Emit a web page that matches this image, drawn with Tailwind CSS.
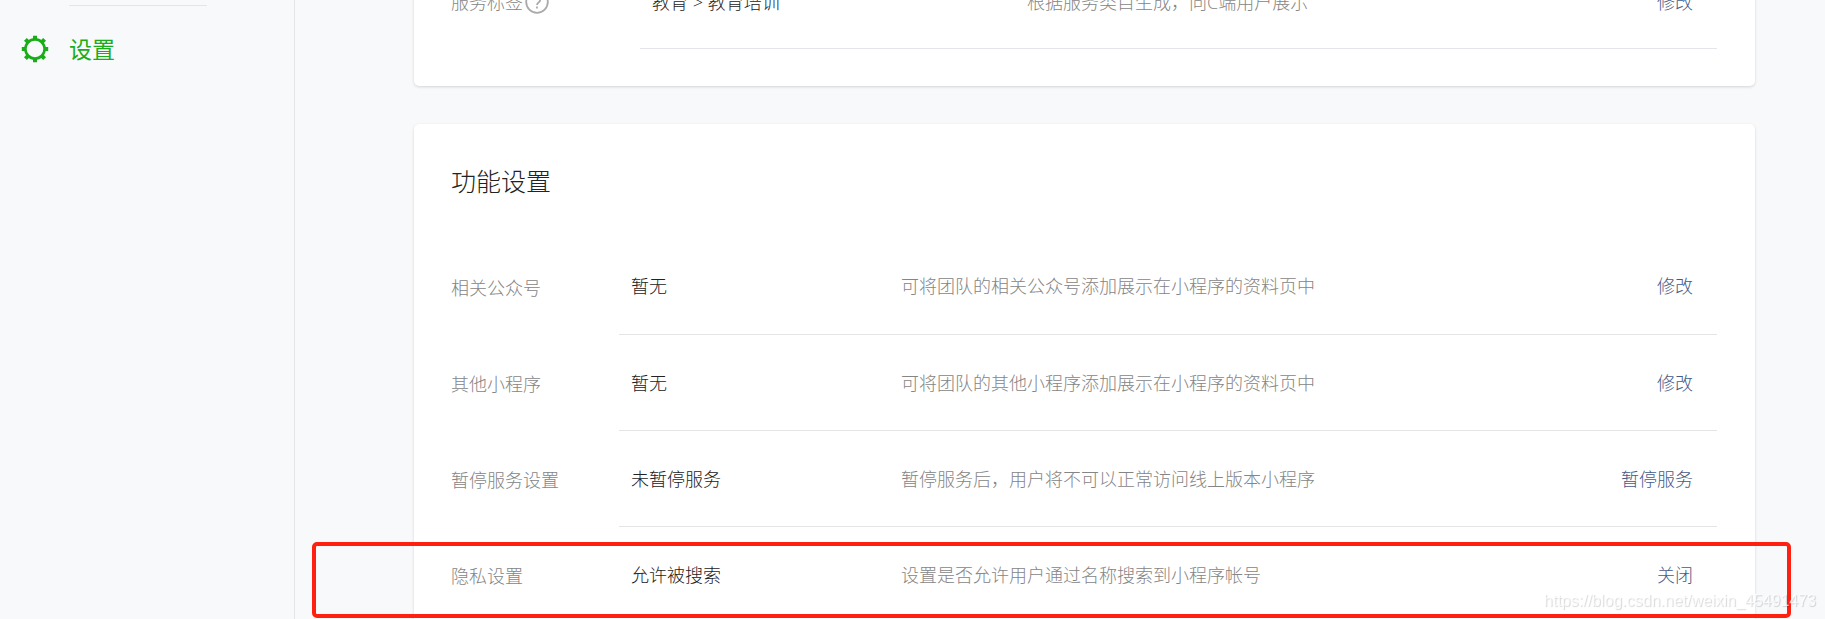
<!DOCTYPE html>
<html lang="zh-CN">
  <head>
    <meta charset="UTF-8" />
    <meta name="viewport" content="width=device-width, initial-scale=1.0" />
    <script src="https://cdn.jsdelivr.net/npm/@tailwindcss/browser@4"></script>
    <title>设置</title>
  </head>

  <body
    class="flex h-screen overflow-hidden bg-[#f8f9fb] font-['Open_Sans','Noto_Sans_CJK_SC',sans-serif] font-light text-lg"
  >
    <!-- sidebar -->
    <aside class="w-[295px] shrink-0 border-r border-[#e4e5e7]">
      <hr class="mt-[5px] ml-[69px] w-[138px] border-[#e4e5e7]" />
      <nav class="mt-6 pl-[21px]">
        <a href="#" class="flex items-start gap-5 text-[#1aad19]">
          <svg class="mt-[5px] size-7" viewBox="-14 -14 28 28" aria-hidden="true">
            <circle r="9.6" fill="none" stroke="currentColor" stroke-width="2.6" />
            <g fill="none" stroke="currentColor" stroke-width="4">
              <path d="M0-13.2V-10M0 13.2V10M-13.2 0H-10M13.2 0H10" />
              <path d="M-9.6-9.6L-7-7M9.6 9.6L7 7M-9.6 9.6L-7 7M9.6-9.6L7-7" />
            </g>
          </svg>
          <span class="text-[23px] leading-[38px] font-normal">设置</span>
        </a>
      </nav>
    </aside>

    <main class="ml-[119px] mr-[70px] flex-1">
      <!-- basic info, scrolled almost out of view -->
      <section
        class="-mt-12 rounded-[5px] bg-white pl-[37px] pr-[38px] pb-[37px] shadow-[0_1px_3px_rgba(0,0,0,0.15)]"
      >
        <table class="w-full table-fixed">
          <tbody>
            <tr class="h-24">
              <th scope="row" class="w-[189px] pt-1 text-left font-light text-[#858585]">
                <span class="flex items-center gap-0.5">
                  服务标签
                  <button type="button" aria-label="帮助" class="text-[#aaaaaa]">
                    <svg class="size-6" viewBox="0 0 24 24" fill="none" stroke="currentColor" stroke-width="1.8">
                      <circle cx="12" cy="12" r="10.8" />
                      <path d="M8.8 9.6a3.2 3.2 0 1 1 5 2.6c-1.2.9-1.8 1.4-1.8 2.8M12 16.4v2" />
                    </svg>
                  </button>
                </span>
              </th>
              <td class="w-[375px] border-b border-[#e4e4ea] pt-1 pl-3 text-[#222222]">教育 &gt; 教育培训</td>
              <td class="border-b border-[#e4e4ea] pt-1 pl-3 text-[#858585]">根据服务类目生成，向C端用户展示</td>
              <td class="w-32 border-b border-[#e4e4ea] pt-1 pr-6 text-right">
                <a href="#" class="text-[#455a88]">修改</a>
              </td>
            </tr>
          </tbody>
        </table>
      </section>

      <!-- feature settings -->
      <section
        class="mt-[38px] rounded-[5px] bg-white pt-10 pl-[37px] pr-[38px] pb-10 shadow-[0_1px_3px_rgba(0,0,0,0.15)]"
      >
        <h2 class="mb-[41px] text-[25px] leading-[34px] text-[#222222]">功能设置</h2>
        <div class="relative">
          <table class="w-full table-fixed">
            <tbody>
              <tr class="h-24">
                <th scope="row" class="w-[168px] pt-0.5 text-left font-light text-[#858585]">相关公众号</th>
                <td class="w-[270px] border-b border-[#e4e5e7] pl-3 text-[#222222]">暂无</td>
                <td class="border-b border-[#e4e5e7] pl-3 text-[#858585]">可将团队的相关公众号添加展示在小程序的资料页中</td>
                <td class="w-32 border-b border-[#e4e5e7] pr-6 text-right">
                  <a href="#" class="text-[#455a88]">修改</a>
                </td>
              </tr>
              <tr class="h-24">
                <th scope="row" class="pt-0.5 text-left font-light text-[#858585]">其他小程序</th>
                <td class="border-b border-[#e4e5e7] pl-3 text-[#222222]">暂无</td>
                <td class="border-b border-[#e4e5e7] pl-3 text-[#858585]">可将团队的其他小程序添加展示在小程序的资料页中</td>
                <td class="border-b border-[#e4e5e7] pr-6 text-right">
                  <a href="#" class="text-[#455a88]">修改</a>
                </td>
              </tr>
              <tr class="h-24">
                <th scope="row" class="pt-0.5 text-left font-light text-[#858585]">暂停服务设置</th>
                <td class="border-b border-[#e4e5e7] pl-3 text-[#222222]">未暂停服务</td>
                <td class="border-b border-[#e4e5e7] pl-3 text-[#858585]">暂停服务后，用户将不可以正常访问线上版本小程序</td>
                <td class="border-b border-[#e4e5e7] pr-6 text-right">
                  <a href="#" class="text-[#455a88]">暂停服务</a>
                </td>
              </tr>
              <tr class="h-24">
                <th scope="row" class="pt-0.5 text-left font-light text-[#858585]">隐私设置</th>
                <td class="pl-3 text-[#222222]">允许被搜索</td>
                <td class="pl-3 text-[#858585]">设置是否允许用户通过名称搜索到小程序帐号</td>
                <td class="pr-6 text-right">
                  <a href="#" class="text-[#455a88]">关闭</a>
                </td>
              </tr>
            </tbody>
          </table>
          <!-- highlight round the privacy row -->
          <div
            class="pointer-events-none absolute -left-[139px] -right-[74px] bottom-[5px] h-[76px] rounded-[5px] border-4 border-[#ff2012]"
          ></div>
        </div>
      </section>
    </main>

    <p
      class="pointer-events-none fixed right-[9px] bottom-[6px] font-['Liberation_Sans',sans-serif] text-base font-normal text-white/70 [text-shadow:1px_1px_1px_rgba(0,0,0,0.16)]"
    >
      https://blog.csdn.net/weixin_45491473
    </p>
  </body>
</html>
